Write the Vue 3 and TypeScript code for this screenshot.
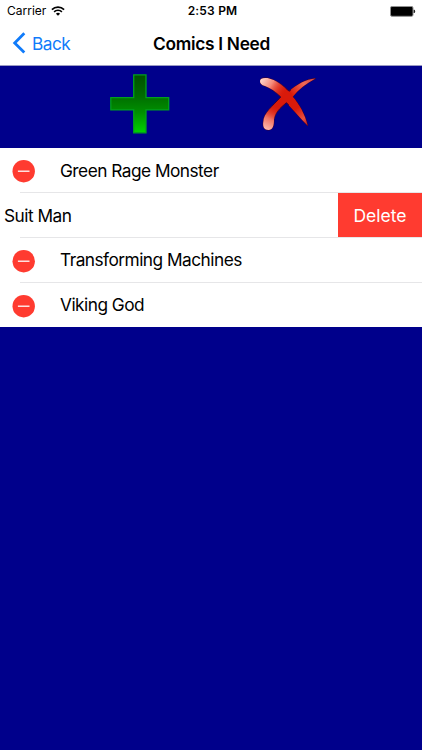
<script setup lang="ts">
interface Comic {
  name: string
  swiped: boolean
}

const comics: Comic[] = [
  { name: 'Green Rage Monster', swiped: false },
  { name: 'Suit Man', swiped: true },
  { name: 'Transforming Machines', swiped: false },
  { name: 'Viking God', swiped: false },
]

const crossPath =
  'M0 4C0 1.500 3 .500 7.500 1 16 3 23.500 8.500 29 14.300 37 7.500 46 2 55.500 1.500 46 6.500 38.500 12.500 32.700 19.700 39 27 45 37 47.700 48.800 41 42 33 32.500 26.500 25.700 20 31 14.800 36 14 42.500 14 49 12.500 53 8.500 53 4.500 53 2.500 50 3.300 45 3.500 36 13 28.500 20.800 20 15.500 14.500 10 10.800 5 9 1.500 8 0 6.500 0 4Z'
</script>

<template>
  <div class="screen">
    <header class="top">
      <div class="status">
        <div class="side">
          <span class="carrier">Carrier</span>
          <svg class="wifi" width="14" height="10" viewBox="0 0 14 10" fill="none" stroke="#000">
            <path d="M.9 3.6a8.6 8.6 0 0 1 12.2 0" stroke-width="1.7" />
            <path d="M3.1 5.9a5.5 5.5 0 0 1 7.8 0" stroke-width="1.6" />
            <path d="M4.9 7.7a3 3 0 0 1 4.2 0L7 9.8z" fill="#000" stroke="none" />
          </svg>
        </div>
        <span class="time">2:53 PM</span>
        <div class="side end">
          <svg width="26" height="11" viewBox="0 0 26 11">
            <rect x=".5" y=".5" width="22.5" height="9.8" rx="1.4" fill="#000" stroke="#909090" />
            <path d="M23.6 3.7h.8q.7.2.7 1.6t-.7 1.7h-.8z" fill="#222" />
          </svg>
        </div>
      </div>
      <nav class="nav">
        <a class="back">
          <svg width="14" height="22" viewBox="0 0 14 22" fill="none" stroke="#107bfa" stroke-width="2.8">
            <path d="M12.300 1.200 2.700 10.900 12.300 20.600" />
          </svg>
          <span class="back-label">Back</span>
        </a>
        <h1 class="title">Comics I Need</h1>
        <span></span>
      </nav>
    </header>

    <div class="tools">
      <svg class="add" width="60" height="60" viewBox="0 0 60 60">
        <defs>
          <linearGradient id="green" x1="0" y1="0" x2="0" y2="1">
            <stop offset="0" stop-color="#005000" />
            <stop offset=".35" stop-color="#006b00" />
            <stop offset=".65" stop-color="#009000" />
            <stop offset="1" stop-color="#00d300" />
          </linearGradient>
        </defs>
        <path d="M23.700.900H36v22.800h22.700v12.200H36v22.900H23.700V35.900H.800V23.700h22.900z" fill="url(#green)" stroke="#00a01e" stroke-width="1.300" />
      </svg>
      <svg class="remove" width="60" height="60" viewBox="0 0 60 60">
        <defs>
          <linearGradient id="shineTop" gradientUnits="userSpaceOnUse" x1="1" y1="3" x2="24" y2="18">
            <stop offset="0" stop-color="#ffd5cc" />
            <stop offset=".4" stop-color="#f58a7a" />
            <stop offset="1" stop-color="#d91a0a" stop-opacity="0" />
          </linearGradient>
          <linearGradient id="shineLow" gradientUnits="userSpaceOnUse" x1="5" y1="53" x2="17" y2="29">
            <stop offset="0" stop-color="#ffc0b6" />
            <stop offset=".45" stop-color="#f07465" />
            <stop offset="1" stop-color="#d91a0a" stop-opacity="0" />
          </linearGradient>
          <linearGradient id="tip" gradientUnits="userSpaceOnUse" x1="32" y1="18" x2="56" y2="1">
            <stop offset="0" stop-color="#d91a0a" />
            <stop offset=".55" stop-color="#ee6a58" />
            <stop offset="1" stop-color="#d04040" />
          </linearGradient>
          <linearGradient id="tail" gradientUnits="userSpaceOnUse" x1="29" y1="20" x2="48" y2="49">
            <stop offset="0" stop-color="#d91a0a" />
            <stop offset=".4" stop-color="#d91a0a" />
            <stop offset=".75" stop-color="#e85040" />
            <stop offset="1" stop-color="#b01818" />
          </linearGradient>
          <clipPath id="cross">
            <path :d="crossPath" />
          </clipPath>
        </defs>
        <path :d="crossPath" fill="#d91a0a" stroke="#40002c" stroke-width="1" />
        <g clip-path="url(#cross)">
          <path d="M31 0h27v20H31z" fill="url(#tip)" />
          <path d="M29 20h24v34H29z" fill="url(#tail)" />
          <path d="M-1 0h29v22H-1z" fill="url(#shineTop)" />
          <path d="M0 24h30v30H0z" fill="url(#shineLow)" />
        </g>
      </svg>
    </div>

    <ul class="list">
      <li v-for="comic in comics" :key="comic.name" class="row" :class="{ swiped: comic.swiped }">
        <svg v-if="!comic.swiped" class="minus" width="24" height="24" viewBox="0 0 24 24">
          <circle cx="11.700" cy="12.200" r="11.200" fill="#ff3b30" />
          <path d="M5.900 12.200h11.600" stroke="#fff" stroke-width="1.300" />
        </svg>
        <span class="name">{{ comic.name }}</span>
        <button v-if="comic.swiped" class="delete">Delete</button>
      </li>
    </ul>
  </div>
</template>

<style>
body {
  background: #00008b;
}
</style>

<style scoped>
.screen {
  width: 422px;
  height: 750px;
  overflow: hidden;
  background: #00008b;
  color: #000;
  font-family: Inter, Roboto, sans-serif;
}
.top {
  box-sizing: border-box;
  height: 66px;
  background: #fff;
  border-bottom: 1px solid #9a9ac4;
}
.status {
  display: grid;
  grid-template-columns: 1fr auto 1fr;
  align-items: center;
  height: 22px;
  padding: 0 6px 0 7px;
}
.side {
  display: flex;
  align-items: center;
  gap: 5px;
}
.wifi {
  margin-top: -1px;
}
.end {
  justify-content: flex-end;
}
.carrier {
  font-size: 12px;
  line-height: 22px;
}
.time {
  padding-left: 2px;
  font-size: 12px;
  font-weight: 600;
  line-height: 22px;
  letter-spacing: 0.200px;
}
.nav {
  display: grid;
  grid-template-columns: 1fr auto 1fr;
  align-items: center;
  height: 42px;
  padding: 0 12px;
}
.back {
  display: flex;
  align-items: center;
  gap: 6px;
  color: #107bfa;
}
.back-label {
  font-size: 17.300px;
  letter-spacing: -0.550px;
}
.title {
  margin: 0;
  padding-left: 1px;
  font-size: 17.300px;
  font-weight: 600;
  letter-spacing: -0.280px;
}
.tools {
  display: flex;
  align-items: flex-start;
  gap: 90px;
  box-sizing: border-box;
  height: 82.400px;
  padding: 8px 0 0 110px;
}
.remove {
  margin-top: 3px;
}
.list {
  margin: 0;
  padding: 0;
  list-style: none;
  background: #fff;
}
.row {
  display: flex;
  align-items: center;
  box-sizing: border-box;
  height: 44.750px;
  padding-left: 12px;
  background: linear-gradient(#e6e6e8, #e6e6e8) 20px 100% / 100% 1px no-repeat;
}
.row:last-child {
  background: none;
}
.minus {
  margin: 1px 24px 0 0;
}
.name {
  flex: 1;
  font-size: 17.300px;
  line-height: 22px;
  letter-spacing: -0.520px;
  white-space: nowrap;
}
.swiped {
  padding-left: 4px;
}
.delete {
  align-self: stretch;
  width: 84px;
  margin-bottom: 0.750px;
  padding: 0;
  border: 0;
  background: #ff3b30;
  color: #fff;
  font: 400 17.500px Inter, Roboto, sans-serif;
}
</style>
